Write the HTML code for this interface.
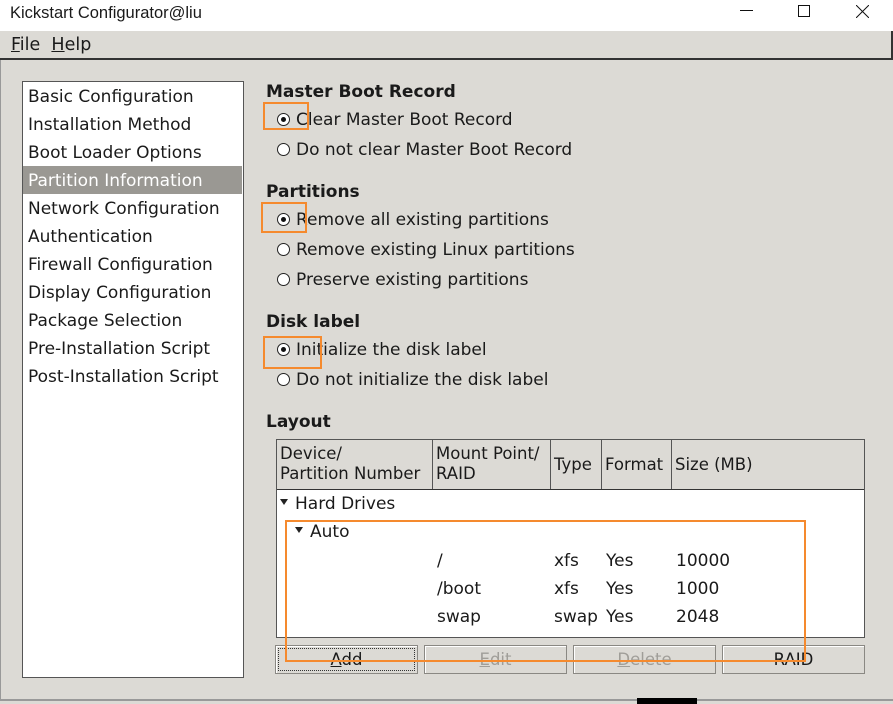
<!DOCTYPE html>
<html><head><meta charset="utf-8"><style>
*{margin:0;padding:0;box-sizing:border-box}
body{width:893px;height:704px;position:relative;background:#dcdad5;font-family:"DejaVu Sans","Liberation Sans",sans-serif;font-size:17px;color:#1a1a1a;overflow:hidden}
.a{position:absolute;white-space:nowrap}
.t{line-height:20px}
.b{font-weight:bold}
.r{position:absolute;width:13px;height:13px;border:1px solid #222;border-radius:50%;background:#fff}
.r.on::after{content:"";position:absolute;left:3px;top:3px;width:5px;height:5px;border-radius:50%;background:#111}
.o{position:absolute;border:2px solid #f58a2e}
.hd{position:absolute;top:440px;height:49px;border-right:1px solid #555;background:#dcdad5;font-size:16.5px;line-height:20px;padding:4px 3px}
.btn{position:absolute;top:645px;height:29px;border:1px solid #8a8883;background:#dcdad5;text-align:center;line-height:28px;font-size:16.5px;box-shadow:inset 1px 1px #fff}
.tri{display:inline-block;width:0;height:0;border-left:4px solid transparent;border-right:4px solid transparent;border-top:6px solid #222;vertical-align:middle;margin-right:7px;position:relative;top:-2px}
</style></head><body>
<div class="a" style="left:0;top:0;width:893px;height:31px;background:#fff"></div>
<div class="a t" style="left:10px;top:3px;font-family:'Liberation Sans',sans-serif;font-size:16.5px">Kickstart Configurator@liu</div>
<div class="a" style="left:740px;top:10px;width:13px;height:1px;background:#111"></div>
<div class="a" style="left:798px;top:5px;width:12px;height:12px;border:1px solid #111"></div>
<svg class="a" style="left:856px;top:5px" width="13" height="13"><path d="M0 0L13 13M13 0L0 13" stroke="#111" stroke-width="1"/></svg>
<div class="a" style="left:0;top:31px;width:893px;height:29px;border-bottom:2px solid #333;border-right:2px solid #333;background:#dcdad5"></div>
<div class="a t" style="left:11px;top:35px;font-size:17.5px"><u>F</u>ile&nbsp;&nbsp;<u>H</u>elp</div>
<div class="a" style="left:0;top:60px;width:1px;height:640px;background:#999"></div>
<div class="a" style="left:0;top:699px;width:893px;height:2px;background:#999"></div>
<div class="a" style="left:637px;top:698px;width:60px;height:6px;background:#000"></div>

<div class="a" style="left:22px;top:81px;width:222px;height:597px;background:#fff;border:1px solid #555"></div>
<div class="a" style="left:23px;top:166px;width:219px;height:28px;background:#9a9893"></div>
<div class="a t" style="left:28px;top:83px;line-height:28px">Basic Configuration<br>Installation Method<br>Boot Loader Options<br><span style="color:#fff">Partition Information</span><br>Network Configuration<br>Authentication<br>Firewall Configuration<br>Display Configuration<br>Package Selection<br>Pre-Installation Script<br>Post-Installation Script</div>

<div class="a t b" style="left:266px;top:82px">Master Boot Record</div>
<div class="r on" style="left:277px;top:113px"></div><div class="a t" style="left:296px;top:110px">Clear Master Boot Record</div>
<div class="r" style="left:277px;top:143px"></div><div class="a t" style="left:296px;top:140px">Do not clear Master Boot Record</div>
<div class="a t b" style="left:266px;top:182px">Partitions</div>
<div class="r on" style="left:277px;top:213px"></div><div class="a t" style="left:296px;top:210px">Remove all existing partitions</div>
<div class="r" style="left:277px;top:243px"></div><div class="a t" style="left:296px;top:240px">Remove existing Linux partitions</div>
<div class="r" style="left:277px;top:273px"></div><div class="a t" style="left:296px;top:270px">Preserve existing partitions</div>
<div class="a t b" style="left:266px;top:312px">Disk label</div>
<div class="r on" style="left:277px;top:343px"></div><div class="a t" style="left:296px;top:340px">Initialize the disk label</div>
<div class="r" style="left:277px;top:373px"></div><div class="a t" style="left:296px;top:370px">Do not initialize the disk label</div>
<div class="a t b" style="left:266px;top:412px">Layout</div>

<div class="a" style="left:276px;top:439px;width:589px;height:199px;background:#fff;border:1px solid #555"></div>
<div class="hd" style="left:277px;width:156px">Device/<br>Partition Number</div>
<div class="hd" style="left:433px;width:118px">Mount Point/<br>RAID</div>
<div class="hd" style="left:551px;width:51px;line-height:42px">Type</div>
<div class="hd" style="left:602px;width:70px;line-height:42px">Format</div>
<div class="hd" style="left:672px;width:192px;border-right:none;line-height:42px">Size (MB)</div>
<div class="a" style="left:277px;top:489px;width:587px;height:1px;background:#333"></div>
<div class="a t" style="left:280px;top:494px"><span class="tri"></span>Hard Drives</div>
<div class="a t" style="left:295px;top:522px"><span class="tri"></span>Auto</div>
<div class="a t" style="left:437px;top:547px;line-height:28px">/<br>/boot<br>swap</div>
<div class="a t" style="left:554px;top:547px;line-height:28px">xfs<br>xfs<br>swap</div>
<div class="a t" style="left:606px;top:547px;line-height:28px">Yes<br>Yes<br>Yes</div>
<div class="a t" style="left:676px;top:547px;line-height:28px">10000<br>1000<br>2048</div>

<div class="btn" style="left:275px;width:143px;outline:1px dotted #333;outline-offset:-4px"><u>A</u>dd</div>
<div class="btn" style="left:424px;width:143px;color:#a09e99"><u>E</u>dit</div>
<div class="btn" style="left:573px;width:143px;color:#a09e99"><u>D</u>elete</div>
<div class="btn" style="left:722px;width:143px">RAID</div>

<div class="o" style="left:263px;top:102px;width:46px;height:28px"></div>
<div class="o" style="left:261px;top:202px;width:46px;height:31px"></div>
<div class="o" style="left:263px;top:336px;width:59px;height:33px"></div>
<div class="o" style="left:285px;top:520px;width:521px;height:142px"></div>
</body></html>
